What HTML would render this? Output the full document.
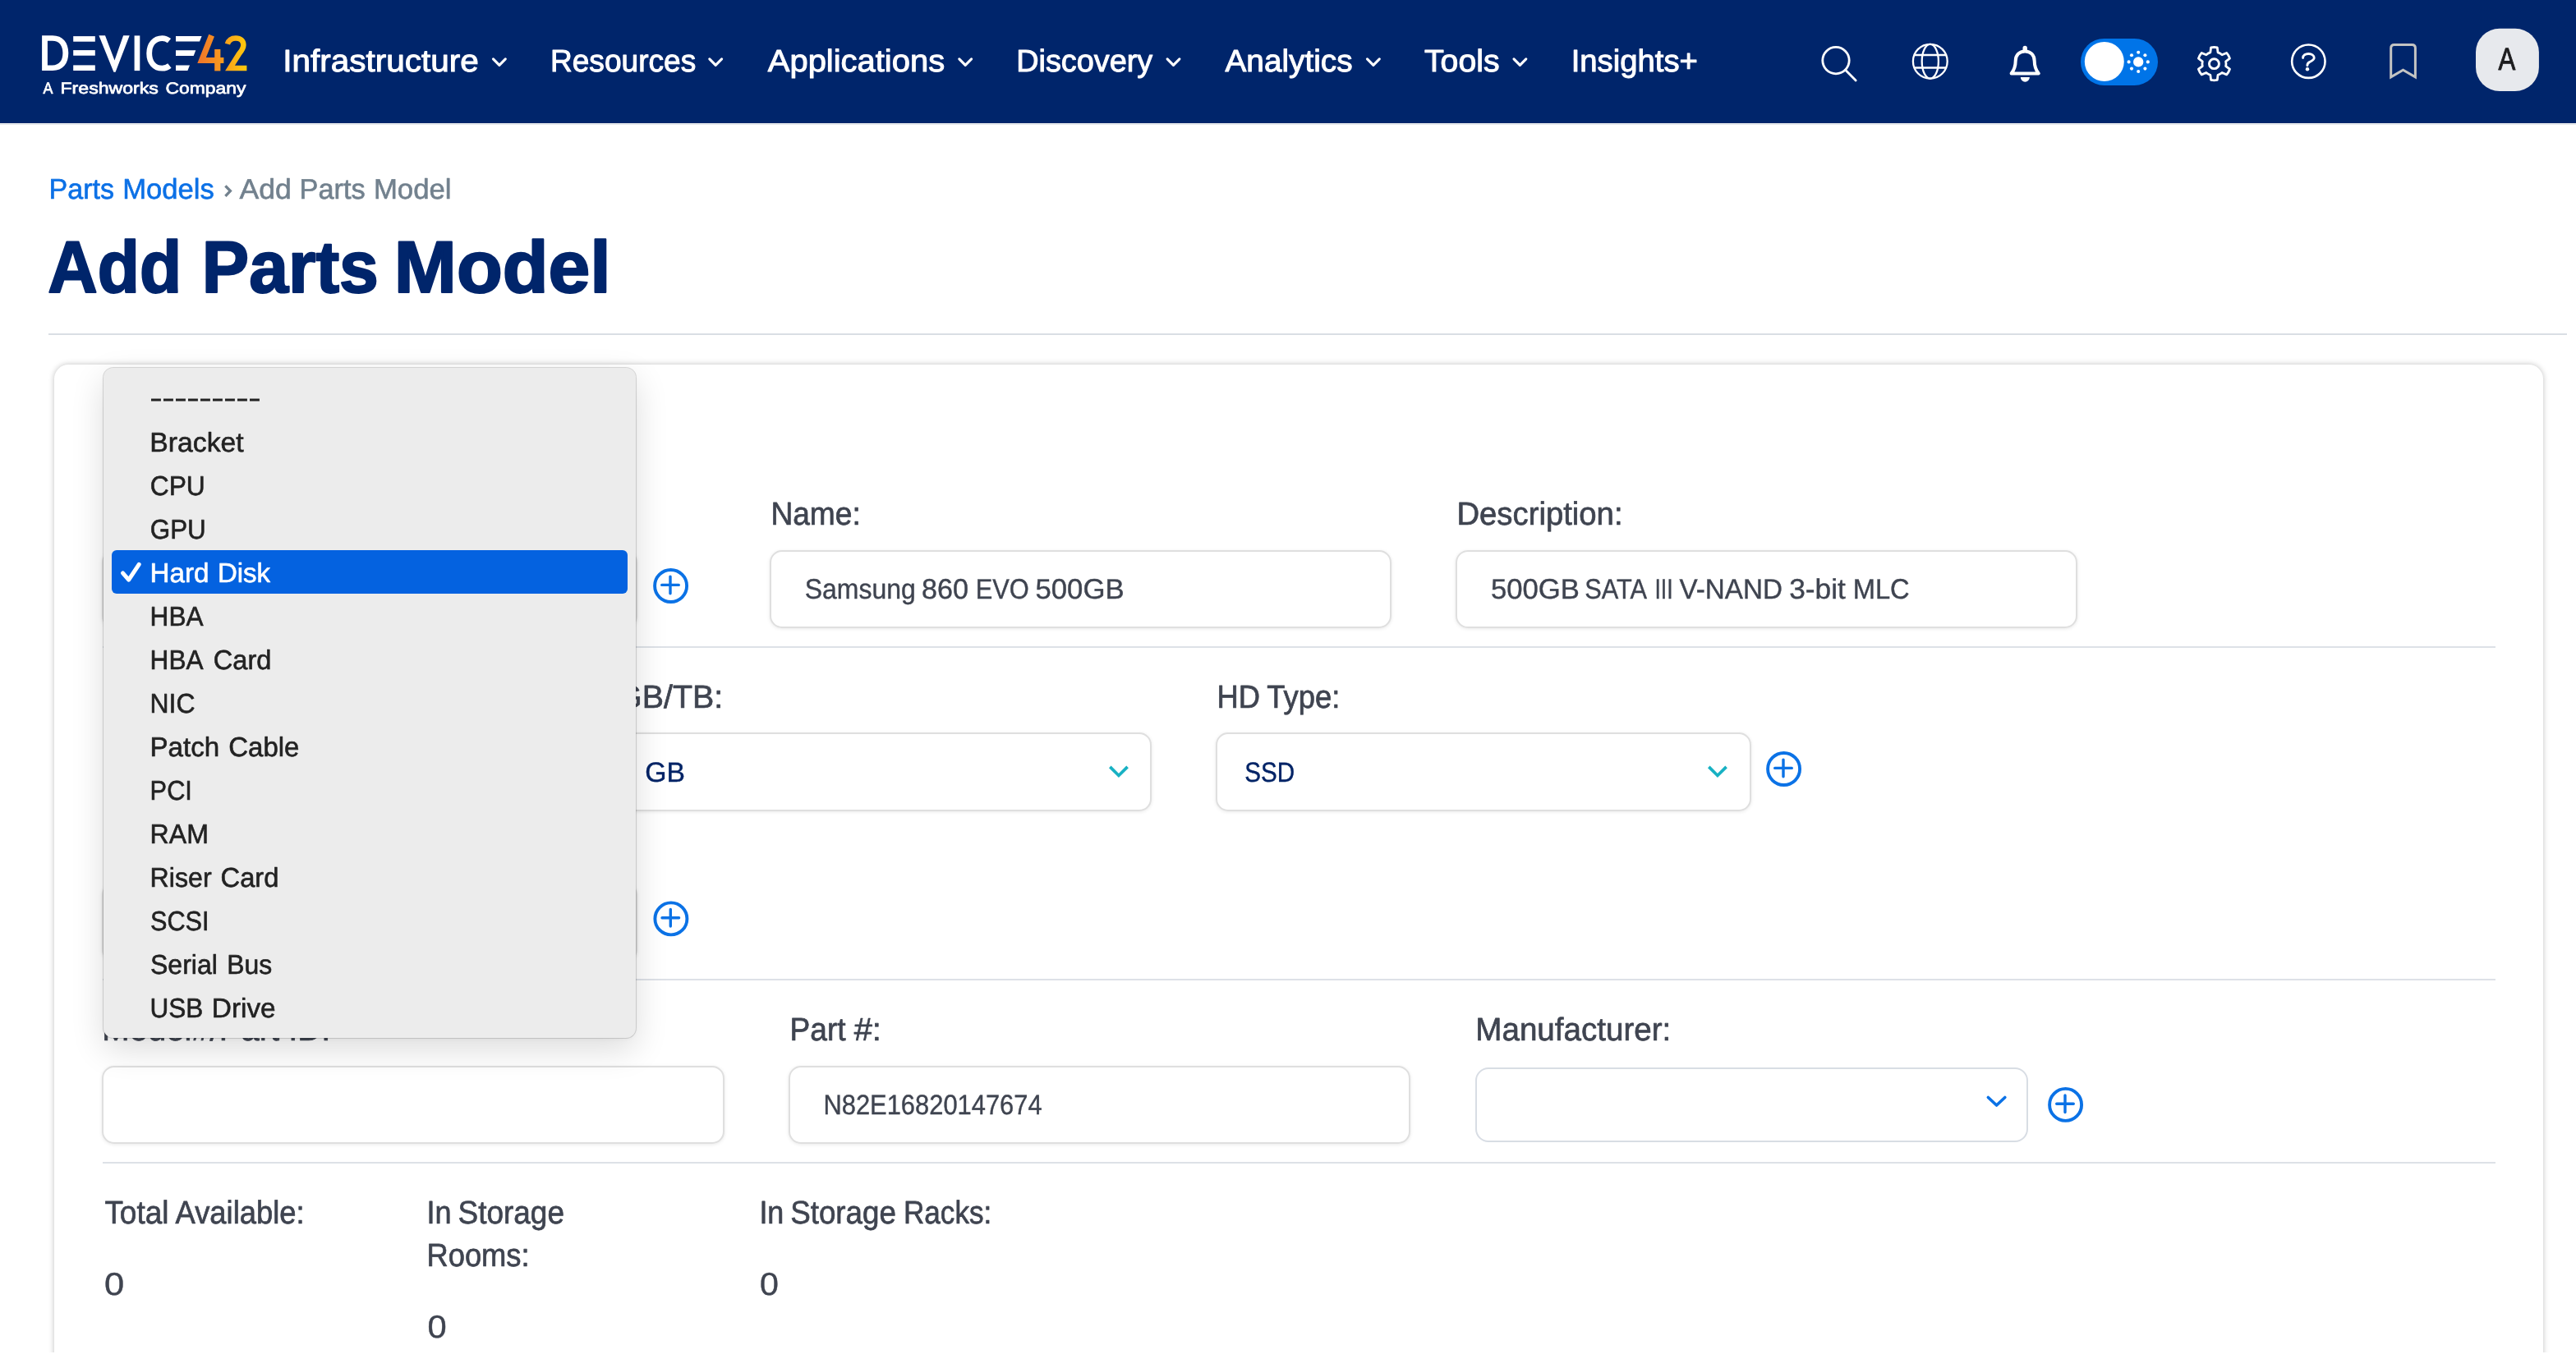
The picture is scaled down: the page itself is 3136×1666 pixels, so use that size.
<!DOCTYPE html>
<html lang="en">
<head>
<meta charset="utf-8">
<title>Add Parts Model | Device42</title>
<style>
*{box-sizing:border-box}
html,body{margin:0;padding:0}
body{width:3136px;height:1666px;overflow:hidden;background:#fff;position:relative;font-family:"Liberation Sans",sans-serif}
.abs{position:absolute}
.t{position:absolute;line-height:1;white-space:pre;font-family:"Liberation Sans",sans-serif}
#hdr{position:absolute;left:0;top:0;width:3136px;height:150px;background:#00256b;box-shadow:0 1px 0 #ebedef,0 2px 0 #e2e6e9}
svg{position:absolute;left:0;top:0;overflow:visible}
svg.tx{will-change:transform}
.hr{position:absolute;height:2px;background:#dde1e7}
#card{position:absolute;left:65.8px;top:444px;width:3030.4px;height:1300px;border-radius:17.5px;background:#fff;box-shadow:0 0 7px rgba(0,0,0,.25)}
.inp{position:absolute;background:#fff;border:2.2px solid #dfdfdf;border-radius:15px;box-shadow:0 1px 4px rgba(0,0,0,.09)}
.sel{position:absolute;background:#fff;border:2.2px solid #dfdfdf;border-radius:15px;box-shadow:0 1px 4px rgba(0,0,0,.09)}
.sel2{position:absolute;background:#fff;border:2.5px solid #d8dde4;border-radius:16px}
#pop{position:absolute;left:125.9px;top:447.7px;width:648.6px;height:816.2px;background:#ececec;border-radius:12px;box-shadow:0 0 0 1px rgba(0,0,0,.14),0 14px 40px rgba(0,0,0,.14),0 2px 6px rgba(0,0,0,.04)}
#selrow{position:absolute;left:136px;top:669.9px;width:628.1px;height:53.1px;border-radius:6px;background:#0462e0}
#cut{position:absolute;left:0;top:1646.9px;width:3136px;height:20px;background:#fff}
</style>
</head>
<body>
<!-- ===== header ===== -->
<div id="hdr"></div>
<svg id="hsvg" width="3136" height="150" viewBox="0 0 3136 150">
<defs>
<linearGradient id="g42" gradientUnits="userSpaceOnUse" x1="241" y1="0" x2="301" y2="0"><stop offset="0" stop-color="#f1752a"/><stop offset="0.5" stop-color="#f89a1e"/><stop offset="1" stop-color="#ffcb0b"/></linearGradient>
</defs>
<!-- logo DEVICE -->
<g fill="#fff">
<path fill-rule="evenodd" d="M51.1 43.2H64C76.6 43.2 83.3 51.8 83.3 64.6S76.6 86.1 64 86.1H51.1Z M57.9 49.8V79.5H63.8C72.2 79.5 76.4 73.6 76.4 64.6S72.2 49.8 63.8 49.8Z"/>
<rect x="89.2" y="44.1" width="26.6" height="6.6"/><rect x="89.2" y="61.1" width="26.6" height="6.6"/><rect x="89.2" y="79.4" width="26.6" height="6.6"/>
<path d="M120.4 43.2H128L139.5 73.4L150.1 43.2H157.7L140.6 87.8H138.4Z"/>
<rect x="163.6" y="43.4" width="6.7" height="42.7"/>
<path d="M214 43.9H245.6L243 50.6H214Z M214 61.2H238.3L235.7 67.9H214Z M214 79.4H231L228.4 86.1H214Z"/>
</g>
<path d="M206 49.7C203.2 47.5 200.4 46.6 197.5 46.6C188 46.6 181.7 53.9 181.7 64.9S188 83.2 197.5 83.2C200.6 83.2 203.6 82.3 206.4 80" fill="none" stroke="#fff" stroke-width="6.8"/>
<!-- 42 -->
<g fill="none" stroke="url(#g42)" stroke-width="7.2">
<path d="M257.6 43.2L245.6 73.5H272.4" stroke-linejoin="miter"/>
<path d="M264.8 60V86.4"/>
<path d="M276.9 53.6C278.3 48.8 282.2 46.4 287 46.4C292.8 46.4 296.4 49.8 296.4 54.8C296.4 58.8 294.3 61.8 290.6 66.2L280 82.9H300.4" stroke-width="6.5" stroke-linejoin="miter" stroke-miterlimit="6"/>
</g>
<!-- nav chevrons -->
<g fill="none" stroke="#fff" stroke-width="3.1" stroke-linecap="round" stroke-linejoin="round">
<path d="M600.5 71.9L607.9 79.3L615.3 71.9"/>
<path d="M863.8 71.9L871.2 79.3L878.6 71.9"/>
<path d="M1167.8 71.9L1175.2 79.3L1182.6 71.9"/>
<path d="M1421.1 71.9L1428.5 79.3L1435.9 71.9"/>
<path d="M1664.5 71.9L1671.9 79.3L1679.3 71.9"/>
<path d="M1843.0 71.9L1850.4 79.3L1857.8 71.9"/>
</g>
<!-- search -->
<g fill="none" stroke="#fff" stroke-width="2.8" stroke-linecap="round">
<circle cx="2235" cy="73.6" r="16.2"/><path d="M2246.6 85.2L2259.2 97.9"/>
</g>
<!-- globe -->
<g fill="none" stroke="#fff" stroke-width="2.3">
<circle cx="2349.8" cy="74.7" r="20.9"/><ellipse cx="2349.8" cy="74.7" rx="10.1" ry="20.9"/>
<path d="M2330.5 67H2369.1M2330.5 82.5H2369.1"/>
</g>
<!-- bell -->
<path d="M2448.6 89.5C2452.5 84.5 2453.7 80.5 2453.7 74.2C2453.7 67 2458.3 62.4 2465.2 62.4C2472.1 62.4 2476.7 67 2476.7 74.2C2476.7 80.5 2477.9 84.5 2481.8 89.5Z" fill="none" stroke="#fff" stroke-width="4" stroke-linejoin="round"/>
<path d="M2465.2 58.5V61" fill="none" stroke="#fff" stroke-width="5.4" stroke-linecap="round"/>
<path d="M2459.8 94.1H2470.9A5.55 5.6 0 0 1 2459.8 94.1Z" fill="#fff"/>
<!-- toggle -->
<rect x="2533" y="46.9" width="94" height="57.1" rx="28.55" fill="#0074e8"/>
<circle cx="2561.8" cy="75" r="24" fill="#fff"/>
<g fill="#fff"><circle cx="2603.2" cy="75.4" r="6.15"/><circle cx="2614.80" cy="75.40" r="2.05"/><circle cx="2611.40" cy="83.60" r="2.05"/><circle cx="2603.20" cy="87.00" r="2.05"/><circle cx="2595.00" cy="83.60" r="2.05"/><circle cx="2591.60" cy="75.40" r="2.05"/><circle cx="2595.00" cy="67.20" r="2.05"/><circle cx="2603.20" cy="63.80" r="2.05"/><circle cx="2611.40" cy="67.20" r="2.05"/></g>
<!-- gear -->
<g fill="none" stroke="#fff" stroke-width="2.8" stroke-linejoin="round">
<path d="M2690.85 63.91L2691.61 57.88A20.1 20.1 0 0 1 2699.29 57.88L2700.05 63.91A14.5 14.5 0 0 1 2705.06 66.80L2710.66 64.44A20.1 20.1 0 0 1 2714.50 71.10L2709.66 74.77A14.5 14.5 0 0 1 2709.66 80.55L2714.50 84.22A20.1 20.1 0 0 1 2710.66 90.88L2705.06 88.52A14.5 14.5 0 0 1 2700.05 91.41L2699.29 97.44A20.1 20.1 0 0 1 2691.61 97.44L2690.85 91.41A14.5 14.5 0 0 1 2685.84 88.52L2680.24 90.88A20.1 20.1 0 0 1 2676.40 84.22L2681.24 80.55A14.5 14.5 0 0 1 2681.24 74.77L2676.40 71.10A20.1 20.1 0 0 1 2680.24 64.44L2685.84 66.80A14.5 14.5 0 0 1 2690.85 63.91Z"/>
<circle cx="2695.45" cy="77.66" r="5.98" stroke-width="2.9"/>
</g>
<!-- help -->
<g fill="none" stroke="#fff" stroke-linecap="round">
<circle cx="2810.35" cy="74.7" r="20.2" stroke-width="2.6"/>
<path d="M2803.6 70.6C2803.6 67.2 2806.6 65.5 2810.4 65.5C2814.2 65.5 2817.2 67.4 2817.2 70.6C2817.2 73.2 2814 74.4 2811.5 75.6C2809.6 76.5 2808.9 77.6 2808.9 79.8" stroke-width="2.85"/>
</g>
<circle cx="2809" cy="84.25" r="2.2" fill="#fff"/>
<!-- bookmark -->
<path d="M2910.7 93.9V58.4Q2910.7 54.4 2914.7 54.4H2936.4Q2940.4 54.4 2940.4 58.4V93.9L2925.5 85.2Z" fill="none" stroke="#c4c4c2" stroke-width="3" stroke-linejoin="miter"/>
<!-- avatar -->
<rect x="3014" y="34.7" width="76.9" height="76.3" rx="29" fill="#e7e9ed"/>
</svg>


<!-- ===== page ===== -->
<div class="hr" style="left:59px;top:405.9px;width:3066px;background:#d9dee4"></div>
<div id="card"></div>
<div class="hr" style="left:125px;top:787px;width:2913px"></div>
<div class="hr" style="left:125px;top:1192px;width:2913px"></div>
<div class="hr" style="left:125px;top:1415.2px;width:2913px"></div>

<!-- inputs -->
<div class="inp" style="left:937.4px;top:670.3px;width:757px;height:94.4px"></div>
<div class="inp" style="left:1772.2px;top:670.3px;width:757px;height:94.4px"></div>
<div class="inp" style="left:124.2px;top:1298px;width:757.4px;height:94.6px"></div>
<div class="inp" style="left:959.9px;top:1298px;width:757px;height:94.6px"></div>
<!-- selects -->
<div class="sel" style="left:124.2px;top:670px;width:652px;height:95px"></div>
<div class="sel" style="left:749.9px;top:891.8px;width:652px;height:96px"></div>
<div class="sel" style="left:1479.8px;top:891.8px;width:652px;height:96px"></div>
<div class="sel" style="left:124.2px;top:1074.5px;width:652px;height:96px"></div>
<div class="sel2" style="left:1796.1px;top:1300px;width:673px;height:91px"></div>
<svg id="psvg" width="3136" height="1666" viewBox="0 0 3136 1666">
<g fill="none" stroke="#0b72e6" stroke-linecap="round">
<circle cx="816.60" cy="713.50" r="19.5" stroke-width="3.9"/><path d="M805.70 712.40H826.30M816.00 702.10V722.70" stroke-width="3.4"/>
<circle cx="2171.60" cy="936.50" r="19.5" stroke-width="3.9"/><path d="M2160.70 935.40H2181.30M2171.00 925.10V945.70" stroke-width="3.4"/>
<circle cx="816.90" cy="1118.90" r="19.5" stroke-width="3.9"/><path d="M806.00 1117.80H826.60M816.30 1107.50V1128.10" stroke-width="3.4"/>
<circle cx="2514.60" cy="1345.40" r="19.5" stroke-width="3.9"/><path d="M2503.70 1344.30H2524.30M2514.00 1334.00V1354.60" stroke-width="3.4"/>
</g>
<g fill="none" stroke="#17b1c3" stroke-width="3.7" stroke-linecap="butt" stroke-linejoin="miter">
<path d="M1351.3 933.9L1361.95 944.5L1372.6 933.9"/>
<path d="M2080.3 933.9L2090.95 944.5L2101.6 933.9"/>
</g>
<path d="M2420.4 1336.5L2430.6 1346L2440.8 1336.5" fill="none" stroke="#0b72e6" stroke-width="3.7" stroke-linecap="round" stroke-linejoin="round"/>
<path d="M274.4 226.4L280.4 232.6L274.4 238.8" fill="none" stroke="#72818e" stroke-width="3.3" stroke-linecap="butt" stroke-linejoin="miter"/>
</svg>


<svg class="tx" width="3136" height="1666" viewBox="0 0 3136 1666" font-family="Liberation Sans, sans-serif" text-rendering="geometricPrecision">
<text id="t0" transform="translate(344.13 87.30) scale(1.0664 1)" font-size="37.97" fill="#ffffff" stroke="#ffffff" stroke-width="1.00" stroke-linejoin="round">Infrastructure</text>
<text id="t1" transform="translate(669.96 87.30) scale(0.9765 1)" font-size="37.97" fill="#ffffff" stroke="#ffffff" stroke-width="1.00" stroke-linejoin="round">Resources</text>
<text id="t2" transform="translate(934.83 87.30) scale(1.0515 1)" font-size="37.97" fill="#ffffff" stroke="#ffffff" stroke-width="1.00" stroke-linejoin="round">Applications</text>
<text id="t3" transform="translate(1237.21 87.30) scale(0.9958 1)" font-size="37.97" fill="#ffffff" stroke="#ffffff" stroke-width="1.00" stroke-linejoin="round">Discovery</text>
<text id="t4" transform="translate(1491.51 87.30) scale(1.0201 1)" font-size="37.97" fill="#ffffff" stroke="#ffffff" stroke-width="1.00" stroke-linejoin="round">Analytics</text>
<text id="t5" transform="translate(1734.02 87.30) scale(1.0321 1)" font-size="37.97" fill="#ffffff" stroke="#ffffff" stroke-width="1.00" stroke-linejoin="round">Tools</text>
<text id="t6" transform="translate(1912.68 87.30) scale(1.0077 1)" font-size="37.97" fill="#ffffff" stroke="#ffffff" stroke-width="1.00" stroke-linejoin="round">Insights+</text>
<text id="t7" transform="translate(52.42 113.95) scale(0.9116 1)" font-size="19.57" fill="#ffffff" stroke="#ffffff" stroke-width="0.70" stroke-linejoin="round">A</text>
<text id="t8" transform="translate(73.48 113.95) scale(1.1816 1)" font-size="19.57" fill="#ffffff" stroke="#ffffff" stroke-width="0.70" stroke-linejoin="round">Freshworks</text>
<text id="t9" transform="translate(201.59 113.95) scale(1.1675 1)" font-size="19.57" fill="#ffffff" stroke="#ffffff" stroke-width="0.70" stroke-linejoin="round">Company</text>
<text id="t10" transform="translate(3041.57 84.65) scale(0.8141 1)" font-size="38.26" fill="#1c1c1e" stroke="#1c1c1e" stroke-width="0.90" stroke-linejoin="round">A</text>
<text id="t11" transform="translate(59.53 241.60) scale(0.9848 1)" font-size="34.64" fill="#0b70e6" stroke="#0b70e6" stroke-width="0.60" stroke-linejoin="round">Parts</text>
<text id="t12" transform="translate(149.20 241.60) scale(0.9999 1)" font-size="34.64" fill="#0b70e6" stroke="#0b70e6" stroke-width="0.60" stroke-linejoin="round">Models</text>
<text id="t13" transform="translate(291.51 241.50) scale(1.0321 1)" font-size="34.49" fill="#72818e" stroke="#72818e" stroke-width="0.60" stroke-linejoin="round">Add</text>
<text id="t14" transform="translate(364.51 241.50) scale(0.9969 1)" font-size="34.49" fill="#72818e" stroke="#72818e" stroke-width="0.60" stroke-linejoin="round">Parts</text>
<text id="t15" transform="translate(454.89 241.50) scale(1.0081 1)" font-size="34.49" fill="#72818e" stroke="#72818e" stroke-width="0.60" stroke-linejoin="round">Model</text>
<text id="t16" transform="translate(58.26 355.80) scale(0.9388 1)" font-size="89.28" fill="#00256b" font-weight="700" stroke="#00256b" stroke-width="2.20" stroke-linejoin="round">Add</text>
<text id="t17" transform="translate(245.84 355.80) scale(0.9629 1)" font-size="89.28" fill="#00256b" font-weight="700" stroke="#00256b" stroke-width="2.20" stroke-linejoin="round">Parts</text>
<text id="t18" transform="translate(479.81 355.80) scale(1.0234 1)" font-size="89.28" fill="#00256b" font-weight="700" stroke="#00256b" stroke-width="2.20" stroke-linejoin="round">Model</text>
<text id="t19" transform="translate(938.40 638.65) scale(0.9421 1)" font-size="39.42" fill="#3f4450" stroke="#3f4450" stroke-width="0.70" stroke-linejoin="round">Name:</text>
<text id="t20" transform="translate(1773.43 638.65) scale(0.9714 1)" font-size="39.42" fill="#3f4450" stroke="#3f4450" stroke-width="0.70" stroke-linejoin="round">Description:</text>
<text id="t21" transform="translate(663.41 861.65) scale(1.0000 1)" font-size="39.42" fill="#3f4450" stroke="#3f4450" stroke-width="0.70" stroke-linejoin="round">Size GB/TB:</text>
<text id="t22" transform="translate(1481.56 861.65) scale(0.9218 1)" font-size="39.42" fill="#3f4450" stroke="#3f4450" stroke-width="0.70" stroke-linejoin="round">HD</text>
<text id="t23" transform="translate(1542.32 861.65) scale(0.9242 1)" font-size="39.42" fill="#3f4450" stroke="#3f4450" stroke-width="0.70" stroke-linejoin="round">Type:</text>
<text id="t24" transform="translate(124.31 1266.65) scale(1.0156 1)" font-size="39.42" fill="#3f4450" stroke="#3f4450" stroke-width="0.70" stroke-linejoin="round">Model#/Part ID:</text>
<text id="t25" transform="translate(961.50 1266.65) scale(0.9426 1)" font-size="39.42" fill="#3f4450" stroke="#3f4450" stroke-width="0.70" stroke-linejoin="round">Part</text>
<text id="t26" transform="translate(1039.65 1266.65) scale(1.0125 1)" font-size="39.42" fill="#3f4450" stroke="#3f4450" stroke-width="0.70" stroke-linejoin="round">#:</text>
<text id="t27" transform="translate(1796.31 1266.65) scale(0.9791 1)" font-size="39.42" fill="#3f4450" stroke="#3f4450" stroke-width="0.70" stroke-linejoin="round">Manufacturer:</text>
<text id="t28" transform="translate(127.38 1489.55) scale(0.9375 1)" font-size="39.42" fill="#3f4450" stroke="#3f4450" stroke-width="0.70" stroke-linejoin="round">Total</text>
<text id="t29" transform="translate(213.52 1489.55) scale(0.9232 1)" font-size="39.42" fill="#3f4450" stroke="#3f4450" stroke-width="0.70" stroke-linejoin="round">Available:</text>
<text id="t30" transform="translate(519.48 1489.65) scale(0.9145 1)" font-size="39.42" fill="#3f4450" stroke="#3f4450" stroke-width="0.70" stroke-linejoin="round">In</text>
<text id="t31" transform="translate(557.49 1489.65) scale(0.9379 1)" font-size="39.42" fill="#3f4450" stroke="#3f4450" stroke-width="0.70" stroke-linejoin="round">Storage</text>
<text id="t32" transform="translate(519.46 1542.45) scale(0.9217 1)" font-size="39.42" fill="#3f4450" stroke="#3f4450" stroke-width="0.70" stroke-linejoin="round">Rooms:</text>
<text id="t33" transform="translate(924.39 1489.55) scale(0.9110 1)" font-size="39.42" fill="#3f4450" stroke="#3f4450" stroke-width="0.70" stroke-linejoin="round">In</text>
<text id="t34" transform="translate(962.19 1489.55) scale(0.9327 1)" font-size="39.42" fill="#3f4450" stroke="#3f4450" stroke-width="0.70" stroke-linejoin="round">Storage</text>
<text id="t35" transform="translate(1099.94 1489.55) scale(0.8916 1)" font-size="39.42" fill="#3f4450" stroke="#3f4450" stroke-width="0.70" stroke-linejoin="round">Racks:</text>
<text id="t36" transform="translate(127.00 1576.90) scale(1.1237 1)" font-size="38.70" fill="#3f4450" stroke="#3f4450" stroke-width="0.40" stroke-linejoin="round">0</text>
<text id="t37" transform="translate(520.54 1628.90) scale(1.0735 1)" font-size="38.84" fill="#3f4450" stroke="#3f4450" stroke-width="0.40" stroke-linejoin="round">0</text>
<text id="t38" transform="translate(925.05 1577.00) scale(1.0588 1)" font-size="38.84" fill="#3f4450" stroke="#3f4450" stroke-width="0.40" stroke-linejoin="round">0</text>
<text id="t39" transform="translate(979.65 728.70) scale(0.9316 1)" font-size="34.35" fill="#3f4450" stroke="#3f4450" stroke-width="0.40" stroke-linejoin="round">Samsung</text>
<text id="t40" transform="translate(1122.10 728.70) scale(0.9949 1)" font-size="34.35" fill="#3f4450" stroke="#3f4450" stroke-width="0.40" stroke-linejoin="round">860</text>
<text id="t41" transform="translate(1187.68 728.70) scale(0.8975 1)" font-size="34.35" fill="#3f4450" stroke="#3f4450" stroke-width="0.40" stroke-linejoin="round">EVO</text>
<text id="t42" transform="translate(1260.44 728.70) scale(1.0121 1)" font-size="34.35" fill="#3f4450" stroke="#3f4450" stroke-width="0.40" stroke-linejoin="round">500GB</text>
<text id="t43" transform="translate(1814.89 728.70) scale(1.0107 1)" font-size="34.35" fill="#3f4450" stroke="#3f4450" stroke-width="0.40" stroke-linejoin="round">500GB</text>
<text id="t44" transform="translate(1929.28 728.70) scale(0.8969 1)" font-size="34.35" fill="#3f4450" stroke="#3f4450" stroke-width="0.40" stroke-linejoin="round">SATA</text>
<text id="t45" transform="translate(2014.43 728.70) scale(0.7753 1)" font-size="34.35" fill="#3f4450" stroke="#3f4450" stroke-width="0.40" stroke-linejoin="round">III</text>
<text id="t46" transform="translate(2044.39 728.70) scale(0.9682 1)" font-size="34.35" fill="#3f4450" stroke="#3f4450" stroke-width="0.40" stroke-linejoin="round">V-NAND</text>
<text id="t47" transform="translate(2178.18 728.70) scale(1.0294 1)" font-size="34.35" fill="#3f4450" stroke="#3f4450" stroke-width="0.40" stroke-linejoin="round">3-bit</text>
<text id="t48" transform="translate(2255.69 728.70) scale(0.9517 1)" font-size="34.35" fill="#3f4450" stroke="#3f4450" stroke-width="0.40" stroke-linejoin="round">MLC</text>
<text id="t49" transform="translate(1002.47 1356.80) scale(0.9068 1)" font-size="34.06" fill="#3f4450" stroke="#3f4450" stroke-width="0.40" stroke-linejoin="round">N82E16820147674</text>
<text id="t50" transform="translate(785.20 951.80) scale(0.9942 1)" font-size="33.91" fill="#002366" stroke="#002366" stroke-width="0.40" stroke-linejoin="round">GB</text>
<text id="t51" transform="translate(1515.20 951.80) scale(0.8739 1)" font-size="33.91" fill="#002366" stroke="#002366" stroke-width="0.40" stroke-linejoin="round">SSD</text>
</svg>

<!-- ===== native select popup ===== -->
<div id="pop"></div>
<div id="selrow"></div>
<svg id="osvg" width="3136" height="1666" viewBox="0 0 3136 1666">
<path d="M149.5 697.8L156.7 706.2L169.2 687.4" fill="none" stroke="#fff" stroke-width="5" stroke-linecap="round" stroke-linejoin="round"/>
<path d="M184 487.1H316" fill="none" stroke="#222" stroke-width="3" stroke-dasharray="11.9 3.1"/>
</svg>

<svg class="tx" width="3136" height="1666" viewBox="0 0 3136 1666" font-family="Liberation Sans, sans-serif" text-rendering="geometricPrecision">
<text id="t1000" transform="translate(182.27 549.70) scale(1.0177 1)" font-size="33.19" fill="#222222" stroke="#222222" stroke-width="0.60" stroke-linejoin="round">Bracket</text>
<text id="t1001" transform="translate(182.73 602.69) scale(0.9574 1)" font-size="33.19" fill="#222222" stroke="#222222" stroke-width="0.60" stroke-linejoin="round">CPU</text>
<text id="t1002" transform="translate(182.74 655.67) scale(0.9464 1)" font-size="33.19" fill="#222222" stroke="#222222" stroke-width="0.60" stroke-linejoin="round">GPU</text>
<text id="t1003" transform="translate(182.50 708.65) scale(1.0007 1)" font-size="33.19" fill="#ffffff" stroke="#ffffff" stroke-width="0.60" stroke-linejoin="round">Hard</text>
<text id="t1004" transform="translate(264.91 708.65) scale(0.9951 1)" font-size="33.19" fill="#ffffff" stroke="#ffffff" stroke-width="0.60" stroke-linejoin="round">Disk</text>
<text id="t1005" transform="translate(182.58 761.64) scale(0.9530 1)" font-size="33.19" fill="#222222" stroke="#222222" stroke-width="0.60" stroke-linejoin="round">HBA</text>
<text id="t1006" transform="translate(182.58 814.62) scale(0.9530 1)" font-size="33.19" fill="#222222" stroke="#222222" stroke-width="0.60" stroke-linejoin="round">HBA</text>
<text id="t1007" transform="translate(259.81 814.62) scale(0.9821 1)" font-size="33.19" fill="#222222" stroke="#222222" stroke-width="0.60" stroke-linejoin="round">Card</text>
<text id="t1008" transform="translate(182.56 867.61) scale(0.9622 1)" font-size="33.19" fill="#222222" stroke="#222222" stroke-width="0.60" stroke-linejoin="round">NIC</text>
<text id="t1009" transform="translate(182.50 920.60) scale(0.9991 1)" font-size="33.19" fill="#222222" stroke="#222222" stroke-width="0.60" stroke-linejoin="round">Patch</text>
<text id="t1010" transform="translate(278.20 920.60) scale(0.9950 1)" font-size="33.19" fill="#222222" stroke="#222222" stroke-width="0.60" stroke-linejoin="round">Cable</text>
<text id="t1011" transform="translate(182.62 973.58) scale(0.9268 1)" font-size="33.19" fill="#222222" stroke="#222222" stroke-width="0.60" stroke-linejoin="round">PCI</text>
<text id="t1012" transform="translate(182.56 1026.57) scale(0.9673 1)" font-size="33.19" fill="#222222" stroke="#222222" stroke-width="0.60" stroke-linejoin="round">RAM</text>
<text id="t1013" transform="translate(182.55 1079.55) scale(0.9702 1)" font-size="33.19" fill="#222222" stroke="#222222" stroke-width="0.60" stroke-linejoin="round">Riser</text>
<text id="t1014" transform="translate(268.51 1079.55) scale(0.9864 1)" font-size="33.19" fill="#222222" stroke="#222222" stroke-width="0.60" stroke-linejoin="round">Card</text>
<text id="t1015" transform="translate(182.95 1132.54) scale(0.9251 1)" font-size="33.19" fill="#222222" stroke="#222222" stroke-width="0.60" stroke-linejoin="round">SCSI</text>
<text id="t1016" transform="translate(182.92 1185.52) scale(0.9670 1)" font-size="33.19" fill="#222222" stroke="#222222" stroke-width="0.60" stroke-linejoin="round">Serial</text>
<text id="t1017" transform="translate(276.26 1185.52) scale(0.9624 1)" font-size="33.19" fill="#222222" stroke="#222222" stroke-width="0.60" stroke-linejoin="round">Bus</text>
<text id="t1018" transform="translate(182.38 1238.50) scale(0.9516 1)" font-size="33.19" fill="#222222" stroke="#222222" stroke-width="0.60" stroke-linejoin="round">USB</text>
<text id="t1019" transform="translate(257.79 1238.50) scale(1.0059 1)" font-size="33.19" fill="#222222" stroke="#222222" stroke-width="0.60" stroke-linejoin="round">Drive</text>
</svg>
<div id="cut"></div>
</body>
</html>
